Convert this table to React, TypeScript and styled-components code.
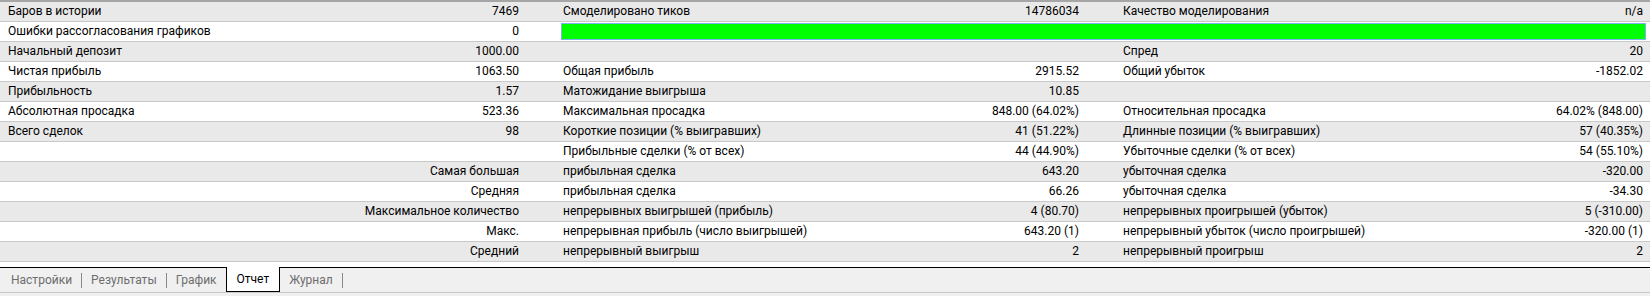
import styled, { createGlobalStyle } from "styled-components";

const GlobalStyle = createGlobalStyle`
  html, body {
    margin: 0;
    padding: 0;
    background: #ffffff;
  }
  body {
    font-family: Roboto, "Liberation Sans", Arial, sans-serif;
    font-size: 12px;
    color: #000000;
  }
`;

interface RowProps {
  $odd: boolean;
}

interface ValueProps {
  $pr: number;
}

interface TabProps {
  $active?: boolean;
}

const Page = styled.div`
  width: 1650px;
  height: 296px;
  display: flex;
  flex-direction: column;
  overflow: hidden;
`;

const Table = styled.div`
  border-top: 2px solid #a6a6a6;
  display: flex;
  flex-direction: column;
`;

const Row = styled.div<RowProps>`
  display: grid;
  grid-template-columns: 300px 255px 305px 255px 285px 250px;
  height: 19px;
  border-bottom: 1px solid #c9c9c9;
  background: ${(p) => (p.$odd ? "#ffffff" : "#e9e9e9")};
  line-height: 19px;
  white-space: nowrap;
`;

const Label = styled.div`
  padding-left: 8px;
  overflow: hidden;
`;

const Value = styled.div<ValueProps>`
  text-align: right;
  padding-right: ${(p) => p.$pr}px;
`;

const BarCell = styled.div`
  grid-column: 3 / 7;
  padding: 1px 4px 1px 6px;
  display: flex;
`;

const Bar = styled.div`
  flex: 1;
  background: #00ff00;
  border: 1px solid #7fb2f0;
`;

const Gap = styled.div`
  height: 5px;
  background: #ffffff;
`;

const TabBar = styled.div`
  display: flex;
  align-items: stretch;
  height: 24px;
  padding-left: 2px;
  background: #f0f0f0;
  border-top: 1px solid #000000;
  border-bottom: 1px solid #c8c8c8;
`;

const Tab = styled.div<TabProps>`
  display: flex;
  align-items: center;
  padding: ${(p) => (p.$active ? "0 10px" : "0 9px")};
  margin-top: ${(p) => (p.$active ? "-1px" : "0")};
  color: ${(p) => (p.$active ? "#000000" : "#6d6d6d")};
  background: ${(p) => (p.$active ? "#ffffff" : "transparent")};
  border-left: ${(p) => (p.$active ? "1px solid #000000" : "none")};
  border-right: ${(p) => (p.$active ? "1px solid #000000" : "none")};
  border-bottom: ${(p) => (p.$active ? "1px solid #000000" : "none")};
`;

const Divider = styled.div`
  width: 1px;
  margin: 5px 0 4px;
  background: #8a8a8a;
`;

const Footer = styled.div`
  flex: 1;
  background: #f0f0f0;
`;

type Cells = [string, string, string, string, string, string];

const rows: (Cells | "bar")[] = [
  ["Баров в истории", "7469", "Смоделировано тиков", "14786034", "Качество моделирования", "n/a"],
  "bar",
  ["Начальный депозит", "1000.00", "", "", "Спред", "20"],
  ["Чистая прибыль", "1063.50", "Общая прибыль", "2915.52", "Общий убыток", "-1852.02"],
  ["Прибыльность", "1.57", "Матожидание выигрыша", "10.85", "", ""],
  ["Абсолютная просадка", "523.36", "Максимальная просадка", "848.00 (64.02%)", "Относительная просадка", "64.02% (848.00)"],
  ["Всего сделок", "98", "Короткие позиции (% выигравших)", "41 (51.22%)", "Длинные позиции (% выигравших)", "57 (40.35%)"],
  ["", "", "Прибыльные сделки (% от всех)", "44 (44.90%)", "Убыточные сделки (% от всех)", "54 (55.10%)"],
  ["", "Самая большая", "прибыльная сделка", "643.20", "убыточная сделка", "-320.00"],
  ["", "Средняя", "прибыльная сделка", "66.26", "убыточная сделка", "-34.30"],
  ["", "Максимальное количество", "непрерывных выигрышей (прибыль)", "4 (80.70)", "непрерывных проигрышей (убыток)", "5 (-310.00)"],
  ["", "Макс.", "непрерывная прибыль (число выигрышей)", "643.20 (1)", "непрерывный убыток (число проигрышей)", "-320.00 (1)"],
  ["", "Средний", "непрерывный выигрыш", "2", "непрерывный проигрыш", "2"],
];

const tabs = ["Настройки", "Результаты", "График", "Отчет", "Журнал"];
const activeTab = "Отчет";

const App: React.FC = () => {
  return (
    <Page>
      <GlobalStyle />
      <Table>
        {rows.map((r, i) =>
          r === "bar" ? (
            <Row key={i} $odd={i % 2 === 1}>
              <Label>Ошибки рассогласования графиков</Label>
              <Value $pr={36}>0</Value>
              <BarCell>
                <Bar />
              </BarCell>
            </Row>
          ) : (
            <Row key={i} $odd={i % 2 === 1}>
              <Label>{r[0]}</Label>
              <Value $pr={36}>{r[1]}</Value>
              <Label>{r[2]}</Label>
              <Value $pr={36}>{r[3]}</Value>
              <Label>{r[4]}</Label>
              <Value $pr={7}>{r[5]}</Value>
            </Row>
          )
        )}
      </Table>
      <Gap />
      <TabBar>
        {tabs.map((t, i) => {
          const active = t === activeTab;
          const nextActive = tabs[i + 1] === activeTab;
          return [
            <Tab key={t} $active={active}>
              {t}
            </Tab>,
            !active && !nextActive ? <Divider key={t + "-d"} /> : null,
          ];
        })}
      </TabBar>
      <Footer />
    </Page>
  );
};

export default App;
